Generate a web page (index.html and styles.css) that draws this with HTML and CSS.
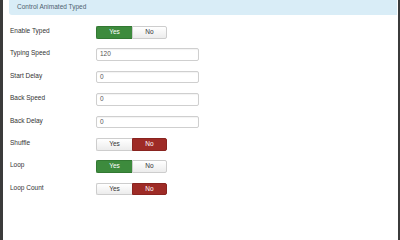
FILE: index.html
```html
<!DOCTYPE html>
<html>
<head>
<meta charset="utf-8">
<link rel="stylesheet" href="styles.css">
</head>
<body>
<div class="panel">
  <div class="alert">Control Animated Typed</div>
  <div class="form">
    <div class="row">
      <div class="label">Enable Typed</div>
      <div class="toggle"><span class="btn yes on">Yes</span><span class="btn no">No</span></div>
    </div>
    <div class="row">
      <div class="label">Typing Speed</div>
      <div class="input">120</div>
    </div>
    <div class="row">
      <div class="label">Start Delay</div>
      <div class="input">0</div>
    </div>
    <div class="row">
      <div class="label">Back Speed</div>
      <div class="input">0</div>
    </div>
    <div class="row">
      <div class="label">Back Delay</div>
      <div class="input">0</div>
    </div>
    <div class="row">
      <div class="label">Shuffle</div>
      <div class="toggle"><span class="btn yes">Yes</span><span class="btn no off">No</span></div>
    </div>
    <div class="row">
      <div class="label">Loop</div>
      <div class="toggle"><span class="btn yes on">Yes</span><span class="btn no">No</span></div>
    </div>
    <div class="row">
      <div class="label">Loop Count</div>
      <div class="toggle"><span class="btn yes">Yes</span><span class="btn no off">No</span></div>
    </div>
  </div>
</div>
</body>
</html>
```
FILE: styles.css
```css
html, body {
  margin: 0;
  padding: 0;
  min-height: 100%;
}
body {
  background: #3b3b3b;
  font-family: "Liberation Sans", Arial, sans-serif;
  font-size: 6.5px;
  color: #333;
}
.panel {
  margin: 0 2px 0 3px;
  min-height: 100vh;
  background: #fff;
  overflow: hidden;
}
.alert {
  margin: 0 1px 0 6px;
  height: 15px;
  line-height: 13px;
  padding-left: 8px;
  background: #d9edf7;
  border-bottom-left-radius: 3px;
  color: #4f626f;
  box-sizing: border-box;
}
.form {
  padding: 11px 0 0 7px;
}
.row {
  display: flex;
  align-items: flex-start;
  height: 22.4px;
}
.label {
  width: 86px;
  height: 12.7px;
  line-height: 10px;
  color: #333;
}
.input {
  width: 103px;
  height: 12.7px;
  box-sizing: border-box;
  border: 1px solid #cfcfcf;
  border-radius: 2px;
  padding-left: 3px;
  line-height: 10.7px;
  color: #555;
  box-shadow: inset 0 1px 1px rgba(0,0,0,0.05);
}
.toggle {
  display: flex;
  height: 12.7px;
}
.btn {
  display: block;
  box-sizing: border-box;
  height: 12.7px;
  line-height: 10.7px;
  text-align: center;
  border: 1px solid #cdcdcd;
  background: linear-gradient(#ffffff, #ececec);
  color: #333;
}
.yes {
  width: 36px;
  border-radius: 2px 0 0 2px;
  border-right: none;
}
.no {
  width: 35px;
  border-radius: 0 2px 2px 0;
}
.yes.on {
  background: #3d8b3d;
  border-color: #327832;
  color: #fff;
}
.no.off {
  background: #9e2b26;
  border-color: #892420;
  color: #fff;
}
```
